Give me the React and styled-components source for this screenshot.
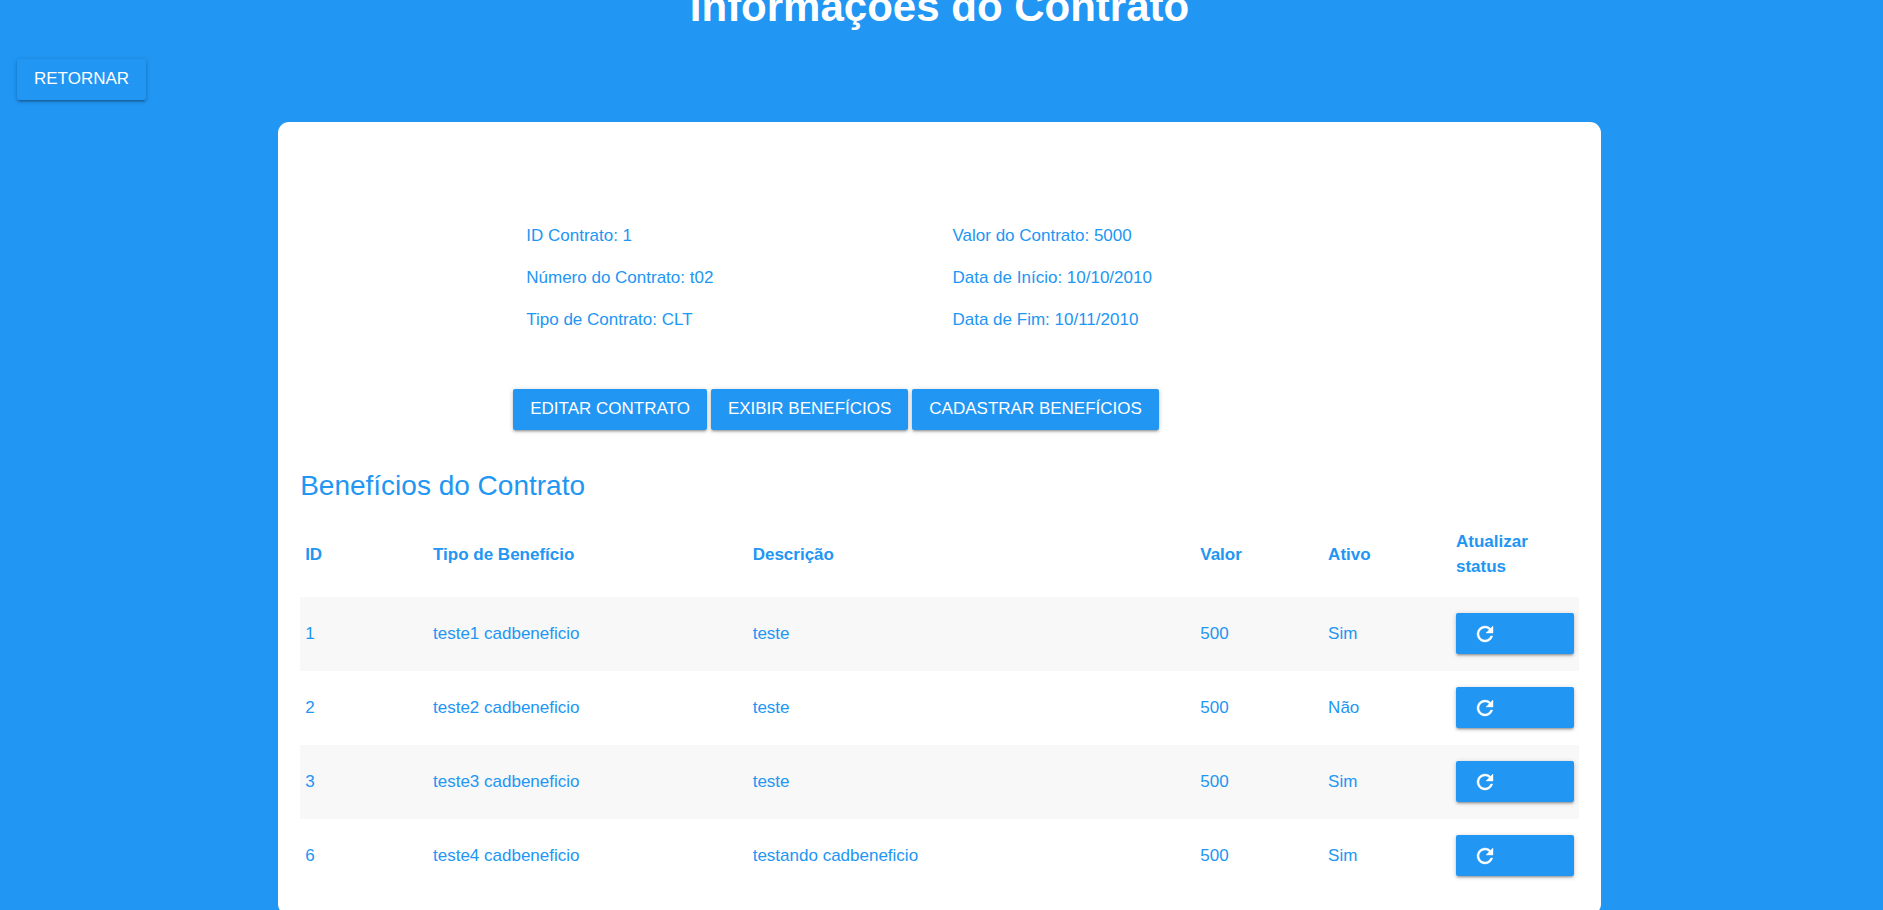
import React from "react";
import styled, { createGlobalStyle } from "styled-components";

const BLUE = "#2196f3";

const GlobalStyle = createGlobalStyle`
  *, *::before, *::after { box-sizing: border-box; }
  body {
    margin: 0;
    background: ${BLUE};
    color: ${BLUE};
    font-family: "Liberation Sans", Arial, sans-serif;
    font-size: 17px;
    line-height: 25px;
  }
`;

const Page = styled.div`
  display: flow-root;
  padding: 0 4px 22px 0;
`;

const PageTitle = styled.h1`
  margin: -16px 0 29px;
  color: #fff;
  font-size: 42px;
  font-weight: 700;
  line-height: 46px;
  text-align: center;
`;

const Toolbar = styled.div`
  display: flex;
  padding: 0 17px;
  margin-bottom: 22px;
`;

const Button = styled.button`
  display: flex;
  align-items: center;
  justify-content: ${(p) => (p.$wide ? "flex-start" : "center")};
  width: ${(p) => (p.$wide ? "100%" : "auto")};
  height: 41px;
  padding: 0 17px ${(p) => (p.$wide ? "0" : "2px")};
  border: 0;
  border-radius: 2px;
  background: ${BLUE};
  color: #fff;
  font: inherit;
  text-transform: uppercase;
  white-space: nowrap;
  cursor: pointer;
  box-shadow: 0 2px 2px 0 rgba(0, 0, 0, 0.14), 0 3px 1px -2px rgba(0, 0, 0, 0.12),
    0 1px 5px 0 rgba(0, 0, 0, 0.2);
`;

const IconSvg = styled.svg`
  width: 24px;
  height: 24px;
  fill: currentColor;
  stroke: currentColor;
  stroke-width: 0.4;
`;

const RefreshIcon = () => (
  <IconSvg viewBox="0 0 24 24" aria-hidden="true">
    <path d="M17.65 6.35A7.96 7.96 0 0 0 12 4a8 8 0 1 0 7.73 10h-2.08A6 6 0 1 1 12 6c1.66 0 3.14.69 4.22 1.78L13 11h7V4z" />
  </IconSvg>
);

const Card = styled.main`
  box-sizing: content-box;
  width: calc(68% + 1px);
  margin: 0 auto;
  padding: 22px;
  border-radius: 11px;
  background: #fff;
`;

const Summary = styled.section`
  padding: 79px 0 0 calc(100% / 6);
`;

const Details = styled.div`
  display: grid;
  grid-template-columns: 40% 40%;
  grid-template-rows: repeat(3, 26px);
  grid-auto-flow: column;
  row-gap: 16px;
  margin-bottom: 56px;
  line-height: 26px;
`;

const Detail = styled.span`
  padding: 0 13px;
`;

const Actions = styled.div`
  display: flex;
  gap: 4px;
`;

const SectionTitle = styled.h2`
  margin: 41px 0 12px;
  font-size: 28px;
  font-weight: 400;
  line-height: 30px;
`;

const Table = styled.table`
  width: 100%;
  table-layout: fixed;
  border-collapse: collapse;
`;

const HeadCell = styled.th`
  width: ${(p) => p.$width};
  padding: 16px 5px 18px;
  text-align: left;
  font-weight: 700;
`;

const Row = styled.tr`
  height: 74px;
  &:nth-child(odd) { background: #f8f8f8; }
`;

const Cell = styled.td`
  padding: 16px 5px 17px;
`;

const details = [
  "ID Contrato: 1",
  "Número do Contrato: t02",
  "Tipo de Contrato: CLT",
  "Valor do Contrato: 5000",
  "Data de Início: 10/10/2010",
  "Data de Fim: 10/11/2010",
];

const columns = [
  ["ID", "10%"],
  ["Tipo de Benefício", "25%"],
  ["Descrição", "35%"],
  ["Valor", "10%"],
  ["Ativo", "10%"],
  ["Atualizar status", "10%"],
];

const benefits = [
  { id: 1, type: "teste1 cadbeneficio", description: "teste", value: 500, active: true },
  { id: 2, type: "teste2 cadbeneficio", description: "teste", value: 500, active: false },
  { id: 3, type: "teste3 cadbeneficio", description: "teste", value: 500, active: true },
  { id: 6, type: "teste4 cadbeneficio", description: "testando cadbeneficio", value: 500, active: true },
];

export default function App() {
  return (
    <Page>
      <GlobalStyle />
      <PageTitle>Informações do Contrato</PageTitle>
      <Toolbar>
        <Button type="button">Retornar</Button>
      </Toolbar>
      <Card>
        <Summary>
          <Details>
            {details.map((text) => (
              <Detail key={text}>{text}</Detail>
            ))}
          </Details>
          <Actions>
            <Button type="button">Editar Contrato</Button>
            <Button type="button">Exibir Benefícios</Button>
            <Button type="button">Cadastrar Benefícios</Button>
          </Actions>
        </Summary>
        <SectionTitle>Benefícios do Contrato</SectionTitle>
        <Table>
          <thead>
            <tr>
              {columns.map(([label, width]) => (
                <HeadCell key={label} scope="col" $width={width}>{label}</HeadCell>
              ))}
            </tr>
          </thead>
          <tbody>
            {benefits.map((b) => (
              <Row key={b.id}>
                <Cell>{b.id}</Cell>
                <Cell>{b.type}</Cell>
                <Cell>{b.description}</Cell>
                <Cell>{b.value}</Cell>
                <Cell>{b.active ? "Sim" : "Não"}</Cell>
                <Cell>
                  <Button type="button" $wide aria-label="Atualizar status">
                    <RefreshIcon />
                  </Button>
                </Cell>
              </Row>
            ))}
          </tbody>
        </Table>
      </Card>
    </Page>
  );
}
